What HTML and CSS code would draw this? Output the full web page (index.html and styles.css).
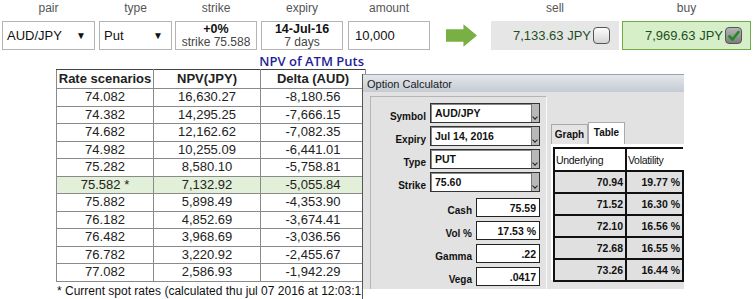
FILE: index.html
```html
<!DOCTYPE html>
<html lang="en">
<head>
  <meta charset="UTF-8" />
  <title>AUD/JPY Put</title>
  <link rel="stylesheet" href="styles.css">
</head>
<body>
  <div class="ticket">
    <div class="field f-pair">
      <div class="label">pair</div>
      <div class="box select"><span>AUD/JPY</span><span class="tri">&#9660;</span></div>
    </div>
    <div class="field f-type">
      <div class="label">type</div>
      <div class="box select"><span>Put</span><span class="tri">&#9660;</span></div>
    </div>
    <div class="field f-strike">
      <div class="label">strike</div>
      <div class="box stack"><b>+0%</b><span class="sub">strike 75.588</span></div>
    </div>
    <div class="field f-expiry">
      <div class="label">expiry</div>
      <div class="box stack"><b>14-Jul-16</b><span class="sub">7 days</span></div>
    </div>
    <div class="field f-amount">
      <div class="label">amount</div>
      <div class="box amount">10,000</div>
    </div>
    <div class="arrow">
      <svg width="33" height="24" viewBox="0 0 33 24"><polygon points="0,5 18,5 18,0 32,11.5 18,23 18,18 0,18" fill="#78b043"/></svg>
    </div>
    <div class="field f-sell">
      <div class="label">sell</div>
      <div class="box price sell">7,133.63 JPY<span class="check"></span></div>
    </div>
    <div class="field f-buy">
      <div class="label">buy</div>
      <div class="box price buy">7,969.63 JPY<span class="check on">
        <svg width="14" height="14" viewBox="0 0 14 14"><path d="M2.5 7.5 L5.5 10.5 L11.5 3" fill="none" stroke="#1f8a1f" stroke-width="2.6" stroke-linecap="round" stroke-linejoin="round"/></svg>
      </span></div>
    </div>
  </div>

  <div class="scenarios">
    <div class="title">NPV of ATM Puts</div>
    <table class="npv">
      <tr><th>Rate scenarios</th><th>NPV(JPY)</th><th>Delta (AUD)</th></tr>
      <tr><td>74.082</td><td>16,630.27</td><td>-8,180.56</td></tr>
      <tr><td>74.382</td><td>14,295.25</td><td>-7,666.15</td></tr>
      <tr><td>74.682</td><td>12,162.62</td><td>-7,082.35</td></tr>
      <tr><td>74.982</td><td>10,255.09</td><td>-6,441.01</td></tr>
      <tr><td>75.282</td><td>8,580.10</td><td>-5,758.81</td></tr>
      <tr class="spot"><td>75.582 *</td><td>7,132.92</td><td>-5,055.84</td></tr>
      <tr><td>75.882</td><td>5,898.49</td><td>-4,353.90</td></tr>
      <tr><td>76.182</td><td>4,852.69</td><td>-3,674.41</td></tr>
      <tr><td>76.482</td><td>3,968.69</td><td>-3,036.56</td></tr>
      <tr><td>76.782</td><td>3,220.92</td><td>-2,455.67</td></tr>
      <tr><td>77.082</td><td>2,586.93</td><td>-1,942.29</td></tr>
    </table>
    <div class="note">* Current spot rates (calculated thu jul 07 2016 at 12:03:1</div>
  </div>

  <div class="calc">
    <div class="calc-title">Option Calculator</div>
    <div class="calc-body">
      <div class="group">
        <div class="form">
          <label>Symbol</label><div class="combo">AUD/JPY<span class="drop"></span></div>
          <label>Expiry</label><div class="combo">Jul 14, 2016<span class="drop"></span></div>
          <label>Type</label><div class="combo">PUT<span class="drop"></span></div>
          <label>Strike</label><div class="combo">75.60<span class="drop"></span></div>
        </div>
        <div class="form values">
          <label>Cash</label><div class="num">75.59</div>
          <label>Vol %</label><div class="num">17.53 %</div>
          <label>Gamma</label><div class="num">.22</div>
          <label>Vega</label><div class="num">.0417</div>
        </div>
      </div>
      <div class="side">
        <div class="tabs">
          <span class="tab">Graph</span><span class="tab active">Table</span>
        </div>
        <div class="tab-panel">
          <table class="vols">
            <tr><th>Underlying</th><th>Volatility</th></tr>
            <tr><td>70.94</td><td>19.77 %</td></tr>
            <tr><td>71.52</td><td>16.30 %</td></tr>
            <tr><td>72.10</td><td>16.56 %</td></tr>
            <tr><td>72.68</td><td>16.55 %</td></tr>
            <tr><td>73.26</td><td>16.44 %</td></tr>
          </table>
        </div>
      </div>
    </div>
  </div>
</body>
</html>
```

FILE: styles.css
```css
body, html {
  margin: 0;
  padding: 0;
  font-family: 'Liberation Sans', Arial, sans-serif;
  color: #111;
  background: #fff;
}

body {
  position: relative;
  width: 753px;
  height: 299px;
  overflow: hidden;
}

/* deal ticket */
.ticket {
  display: flex;
  align-items: flex-end;
  padding: 1px 0 0 2px;
}

.field {
  display: flex;
  flex-direction: column;
}

.label {
  height: 20px;
  font-size: 12px;
  line-height: 14px;
  color: #555;
  text-align: center;
}

.box {
  height: 29px;
  box-sizing: border-box;
  border: 1px solid #b4b4b4;
  background: #fff;
  display: flex;
  align-items: center;
}

.f-pair { width: 93px; margin-right: 4px; }
.f-type { width: 73px; margin-right: 3px; }
.f-strike { width: 82px; margin-right: 4px; }
.f-expiry { width: 82px; margin-right: 5px; }
.f-amount { width: 82px; }
.f-sell { width: 128px; margin-right: 3px; }
.f-buy { width: 129px; }

.select {
  justify-content: space-between;
  padding: 0 8px 0 4px;
  font-size: 13px;
}

.select .tri {
  font-size: 10px;
}

.stack {
  flex-direction: column;
  justify-content: center;
  line-height: 13px;
  font-size: 12.5px;
}

.stack .sub {
  font-size: 12px;
  color: #444;
}

.amount {
  padding-left: 6px;
  font-size: 13px;
}

.arrow {
  width: 32px;
  height: 29px;
  margin: 0 13px 0 16px;
  display: flex;
  align-items: center;
}

.price {
  justify-content: flex-end;
  padding-right: 8px;
  font-size: 13px;
  color: #1d4f1d;
}

.sell {
  background: #e6e6e6;
  border-color: #e6e6e6;
}

.buy {
  background: #d7efc9;
  border-color: #6fab48;
}

.check {
  width: 15px;
  height: 15px;
  margin-left: 2px;
  border: 1px solid #555;
  border-radius: 4px;
  background: linear-gradient(#fdfdfd, #d4d4d4);
  display: flex;
  align-items: center;
  justify-content: center;
}

.check.on {
  background: linear-gradient(#b5b5b5, #7d7d7d);
}

/* scenario table */
.scenarios {
  margin: 4px 0 0 56px;
  width: 310px;
}

.scenarios .title {
  font-family: 'Open Sans', sans-serif;
  font-weight: 600;
  font-size: 13px;
  line-height: 15px;
  color: #1f1f99;
  text-align: right;
  padding-right: 2px;
}

.npv {
  border-collapse: collapse;
  width: 310px;
  table-layout: fixed;
  font-size: 13px;
  color: #222;
}

.npv th, .npv td {
  border: 1px solid #8a8a8a;
  padding: 0;
  text-align: center;
  height: 16.5px;
  line-height: 16px;
}

.npv th {
  height: 18px;
  border-top-color: #444;
}

.npv th:nth-child(1) { width: 96px; }
.npv th:nth-child(2) { width: 106px; }

.npv .spot td {
  background: #e2efd9;
}

.note {
  font-size: 12px;
  line-height: 16px;
  white-space: nowrap;
  padding: 1px 0 0 1px;
}

/* option calculator window */
.calc {
  position: absolute;
  left: 362px;
  top: 74px;
  width: 322px;
  height: 225px;
  background: linear-gradient(#e2e2e2, #e2e2e2) top / 100% 215px no-repeat, #fff;
  border-left: 1px solid #555;
  box-sizing: border-box;
  font-size: 10px;
}

.calc-title {
  height: 18px;
  line-height: 19px;
  padding-left: 4px;
  font-size: 11px;
  color: #1a1a1a;
  background: linear-gradient(#e3e7ec, #c5cbd2);
  border-top: 1px solid #9aa2ab;
  box-sizing: border-box;
}

.calc-body {
  display: flex;
  padding: 4px 0 0 7px;
}

.group {
  width: 177px;
  height: 193px;
  box-sizing: border-box;
  border-top: 1px solid #b5b5b5;
  border-left: 1px solid #b5b5b5;
  border-right: 1px solid #fafafa;
  padding-top: 6px;
}

.form {
  display: grid;
  grid-template-columns: 55px 110px;
  column-gap: 4px;
  row-gap: 3px;
}

.form label {
  text-align: right;
  font-weight: bold;
  align-self: end;
  line-height: 13px;
}

.combo {
  position: relative;
  height: 20px;
  box-sizing: border-box;
  border: 1px solid #333;
  box-shadow: inset 1px 1px 0 #888;
  background: #fff;
  padding-left: 4px;
  line-height: 18px;
  font-weight: bold;
  font-size: 10.5px;
}

.drop {
  position: absolute;
  right: 0;
  top: 0;
  width: 7px;
  height: 18px;
  background: #b8b8b8;
  border-left: 1px solid #777;
}

.drop::after {
  content: "";
  position: absolute;
  left: 1px;
  top: 11px;
  width: 3px;
  height: 3px;
  border-right: 1px solid #222;
  border-bottom: 1px solid #222;
  transform: rotate(45deg);
}

.values {
  grid-template-columns: 101px 64px;
  row-gap: 4px;
  margin-top: 6px;
}

.num {
  height: 19px;
  box-sizing: border-box;
  border: 1px solid #222;
  background: #fff;
  text-align: right;
  padding-right: 3px;
  line-height: 18px;
  font-weight: bold;
  font-size: 10.5px;
}

.side {
  margin: 27px 0 0 4px;
  width: 133px;
}

.tabs {
  display: flex;
  align-items: flex-end;
  height: 21px;
}

.tab {
  width: 35px;
  height: 19px;
  line-height: 20px;
  text-align: center;
  border: 1px solid #aaa;
  border-bottom: none;
  background: #e4e4e4;
  font-weight: bold;
  font-size: 10px;
}

.tab.active {
  height: 21px;
  background: #fff;
}

.tab-panel {
  background: #fff;
  padding: 3px 0 0 2px;
  height: 136px;
  box-sizing: border-box;
}

.vols {
  border-collapse: collapse;
  width: 131px;
  table-layout: fixed;
  font-size: 10.5px;
}

.vols th {
  height: 21px;
  text-align: left;
  font-weight: normal;
  letter-spacing: -0.3px;
  padding: 0 0 0 1px;
  border-left: 2px solid #111;
  border-top: 2px solid #111;
  background: #fff;
}

.vols th:first-child { width: 69px; }

.vols td {
  height: 20px;
  text-align: right;
  font-weight: bold;
  padding: 0 2px 0 0;
  background: #e0e0e0;
  border: 2px solid #111;
}
```
